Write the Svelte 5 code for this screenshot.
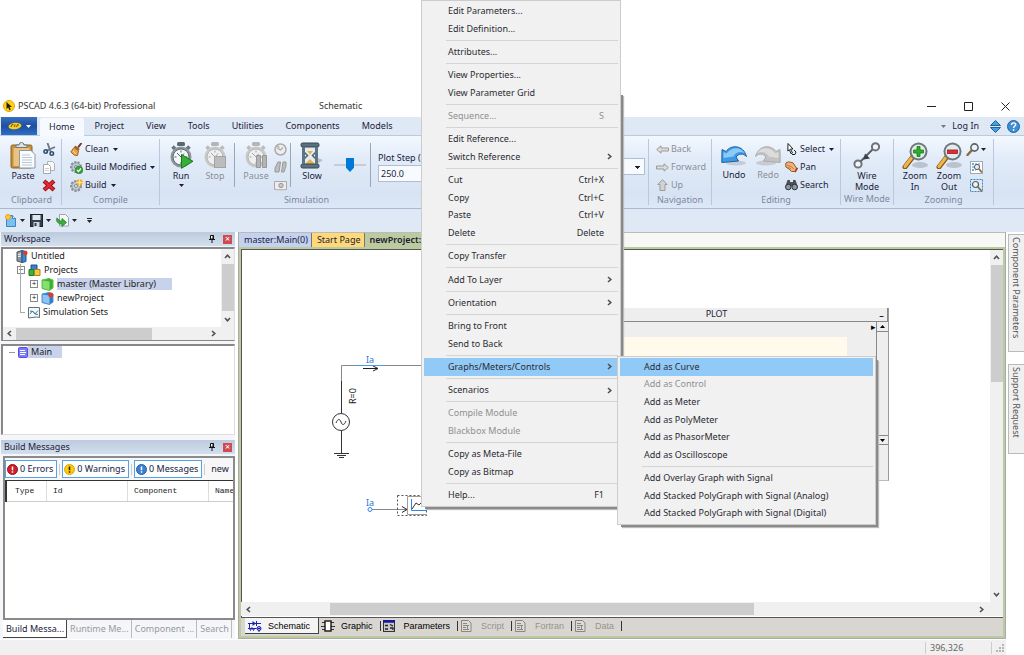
<script lang="ts">
  interface MenuItem {
    label?: string;
    key?: string;
    off?: boolean;
    sub?: boolean;
    hot?: boolean;
  }

  const sep: MenuItem = {};

  const contextMenu: MenuItem[] = [
    { label: 'Edit Parameters...' },
    { label: 'Edit Definition...' },
    sep,
    { label: 'Attributes...' },
    sep,
    { label: 'View Properties...' },
    { label: 'View Parameter Grid' },
    sep,
    { label: 'Sequence...', key: 'S', off: true },
    sep,
    { label: 'Edit Reference...' },
    { label: 'Switch Reference', sub: true },
    sep,
    { label: 'Cut', key: 'Ctrl+X' },
    { label: 'Copy', key: 'Ctrl+C' },
    { label: 'Paste', key: 'Ctrl+V' },
    { label: 'Delete', key: 'Delete' },
    sep,
    { label: 'Copy Transfer' },
    sep,
    { label: 'Add To Layer', sub: true },
    sep,
    { label: 'Orientation', sub: true },
    sep,
    { label: 'Bring to Front' },
    { label: 'Send to Back' },
    sep,
    { label: 'Graphs/Meters/Controls', sub: true, hot: true },
    sep,
    { label: 'Scenarios', sub: true },
    sep,
    { label: 'Compile Module', off: true },
    { label: 'Blackbox Module', off: true },
    sep,
    { label: 'Copy as Meta-File' },
    { label: 'Copy as Bitmap' },
    sep,
    { label: 'Help...', key: 'F1' },
  ];

  const graphMenu: MenuItem[] = [
    { label: 'Add as Curve', hot: true },
    { label: 'Add as Control', off: true },
    { label: 'Add as Meter' },
    { label: 'Add as PolyMeter' },
    { label: 'Add as PhasorMeter' },
    { label: 'Add as Oscilloscope' },
    sep,
    { label: 'Add Overlay Graph with Signal' },
    { label: 'Add Stacked PolyGraph with Signal (Analog)' },
    { label: 'Add Stacked PolyGraph with Signal (Digital)' },
  ];

  const ribbonTabs = ['Home', 'Project', 'View', 'Tools', 'Utilities', 'Components', 'Models'];
  const outputTabs = ['Build Messa...', 'Runtime Me...', 'Component ...', 'Search'];
  const viewTabs = [
    { label: 'Schematic', icon: 'schematic' },
    { label: 'Graphic', icon: 'graphic' },
    { label: 'Parameters', icon: 'params' },
    { label: 'Script', icon: 'script', off: true },
    { label: 'Fortran', icon: 'script', off: true },
    { label: 'Data', icon: 'script', off: true },
  ];

  let activeTab = $state('Home');
  let plotStep = $state('250.0');
  let speed = $state(50);
</script>

{#snippet caret()}
  <svg class="caret" width="5" height="3" viewBox="0 0 5 3"><path d="M0 0h5L2.5 3z" fill="currentColor" /></svg>
{/snippet}

{#snippet chevron(dir: string)}
  <svg class="chev {dir}" width="7" height="7" viewBox="0 0 7 7">
    <path d="M1 5l2.500-2.800L6 5" fill="none" stroke="#505050" stroke-width="1.600" />
  </svg>
{/snippet}

{#snippet stopwatch(off: boolean)}
  <rect x="9" y="0" width="8" height="4" rx="1.500" fill={off ? '#b5b5b5' : '#5d666e'} />
  <path d="M4.500 7l2.500-2.500M21.500 7L19 4.500" stroke={off ? '#bbb' : '#6b747c'} stroke-width="3.500" />
  <circle cx="13" cy="15" r="10.500" fill={off ? '#c9c9c9' : '#8b969d'} />
  <circle cx="13" cy="15" r="8" fill={off ? '#efefef' : '#f4f7f8'} stroke={off ? '#b5b5b5' : '#5f6a71'} />
  <path d="M13 8.500v2M13 20v2M6.500 15h2M17.500 15h2M13 15l-4-4M13 15l3-3.500" stroke={off ? '#a5a5a5' : '#56616a'} fill="none" />
{/snippet}

{#snippet lens()}
  <ellipse cx="18" cy="23" rx="8" ry="3" fill="#b9c2cd" />
  <path d="M10 16L3 25" stroke="#8a5a17" stroke-width="5" stroke-linecap="round" />
  <path d="M9.500 16L3 24.500" stroke="#f0b64a" stroke-width="3" stroke-linecap="round" />
  <circle cx="16.500" cy="9.500" r="9" fill="#6d777e" />
  <circle cx="16.500" cy="9.500" r="7" fill="#e4ecea" />
{/snippet}

{#snippet gear()}
  <circle cx="6" cy="6" r="5" fill="none" stroke="#87929c" stroke-width="2" stroke-dasharray="2.200 1.300" />
  <circle cx="6" cy="6" r="4.200" fill="#c3ccd5" stroke="#8792a0" />
  <circle cx="6" cy="6" r="1.500" fill="#f5f7f9" stroke="#7c8791" />
{/snippet}

{#snippet icon(name: string)}
  {#if name === 'app'}
    <svg width="12" height="12" viewBox="0 0 12 12"><circle cx="6" cy="6" r="5.500" fill="#ffd21a" stroke="#e3a800" /><path d="M3.500 2v7l1.700-1.500 1.200 2.700 1.400-.7-1.300-2.500H9z" fill="#2b1c10" /></svg>
  {:else if name === 'logo'}
    <svg width="14" height="8" viewBox="0 0 14 8"><ellipse cx="7" cy="4" rx="6.500" ry="3.200" fill="#f6cf1c" transform="rotate(-6 7 4)" /><path d="M3 5l1-2.500 1.500.3M7 2.500L6.500 5M8.500 5l1-2.500 1.500.5" stroke="#7a4c00" fill="none" /></svg>
  {:else if name === 'paste'}
    <svg width="26" height="27" viewBox="0 0 26 27">
      <rect x="1" y="3" width="21" height="23" rx="1.500" fill="#c7913c" stroke="#8f6220" />
      <rect x="3.500" y="6" width="16" height="18" fill="#e8c480" />
      <path d="M6 5.500h11V3h-3a2.500 2.500 0 0 0-5 0H6z" fill="#dde1e4" stroke="#6f767c" />
      <path d="M9.500 8.500H21l4 4V26H9.500z" fill="#f9fbfd" stroke="#8d99a8" />
      <path d="M12 13h8M12 15.500h10M12 18h10M12 20.500h10M12 23h10" stroke="#b9c7d8" />
    </svg>
  {:else if name === 'cut'}
    <svg width="13" height="13" viewBox="0 0 13 13"><path d="M4.500 0l3 8.500M12 4L3 8" stroke="#6b7884" stroke-width="1.800" /><circle cx="2.700" cy="8.500" r="1.700" fill="none" stroke="#33506e" stroke-width="1.600" /><circle cx="8.800" cy="10.500" r="1.700" fill="none" stroke="#33506e" stroke-width="1.600" /></svg>
  {:else if name === 'copy'}
    <svg width="12" height="13" viewBox="0 0 12 13"><path d="M4.500.5h5l2 2v7h-7z" fill="#f7f7f7" stroke="#b0b4b9" /><path d="M.5 3.500h5l2 2v7h-7z" fill="#fff" stroke="#a4a8ad" /><path d="M2 7.500h4M2 9.500h4" stroke="#c8ccd0" /></svg>
  {:else if name === 'delete'}
    <svg width="14" height="13" viewBox="0 0 14 13"><path d="M2 2l10 9M12 2L2 11" stroke="#8f0d12" stroke-width="4.200" /><path d="M2.500 2.400l9 8.200M11.500 2.400l-9 8.200" stroke="#e0282e" stroke-width="2.600" /></svg>
  {:else if name === 'clean'}
    <svg width="13" height="13" viewBox="0 0 13 13"><path d="M11.500 0L8 4.500" stroke="#8e2f1a" stroke-width="2" /><path d="M4.500 3.500l4.500 3.500" stroke="#8e6a3a" stroke-width="2.500" /><path d="M4 4.500l4.500 3.500-1 4.500-3-.3L.8 9z" fill="#e9a54b" stroke="#a8641c" /><path d="M3 8l3 3" stroke="#ffe0a6" /></svg>
  {:else if name === 'buildmod'}
    <svg width="13" height="13" viewBox="0 0 13 13">{@render gear()}<circle cx="9" cy="9" r="3.800" fill="#35a23a" stroke="#1b7424" stroke-width=".6" /><path d="M7 9l1.500 1.500L11 7.500" stroke="#fff" stroke-width="1.200" fill="none" /></svg>
  {:else if name === 'build'}
    <svg width="13" height="13" viewBox="0 0 13 13"><g transform="translate(0 1)">{@render gear()}</g><circle cx="9.500" cy="3.500" r="2.800" fill="#ffca3a" stroke="#e89a1a" /><path d="M9.500 0v7M6 3.500h7" stroke="#ffe9a0" stroke-width=".8" /></svg>
  {:else if name === 'run'}
    <svg width="26" height="27" viewBox="0 0 26 27">{@render stopwatch(false)}<path d="M13.500 12.500l11.500 6.800-11.500 7z" fill="#36b035" stroke="#167a1b" /></svg>
  {:else if name === 'stop'}
    <svg width="26" height="27" viewBox="0 0 26 27">{@render stopwatch(true)}<rect x="12.500" y="14.500" width="11" height="11" fill="#bcbcbc" stroke="#a3a3a3" /></svg>
  {:else if name === 'pause'}
    <svg width="26" height="27" viewBox="0 0 26 27">{@render stopwatch(true)}<path d="M13.500 13.500h4v12h-4zM19.500 13.500h4v12h-4z" fill="#b4b4b4" stroke="#979797" /></svg>
  {:else if name === 'clock'}
    <svg width="13" height="13" viewBox="0 0 13 13"><circle cx="6.500" cy="6.500" r="5.500" fill="#eee" stroke="#aaa" stroke-width="1.500" /><path d="M3 5l3.500 2L9 4.500M2.500 2.500l3 2" stroke="#aaa" stroke-width="1.300" fill="none" /></svg>
  {:else if name === 'snap'}
    <svg width="13" height="12" viewBox="0 0 13 12"><path d="M4 1h2.500L5 11H1V7zM9 1h3v4l-2 6H7.500z" fill="#bdbdbd" stroke="#999" /></svg>
  {:else if name === 'camera'}
    <svg width="13" height="11" viewBox="0 0 13 11"><path d="M.5 1.500h12v8H.5z" fill="#ececec" stroke="#a9a9a9" /><circle cx="7" cy="5.500" r="2.200" fill="#c6c6c6" stroke="#999" /><path d="M2 10h10" stroke="#ccc" /></svg>
  {:else if name === 'slow'}
    <svg width="24" height="27" viewBox="0 0 24 27">
      <path d="M14 24l9-6-5-2z" fill="#b7bfc7" />
      <path d="M3 3h14v6l-4.500 4.500L17 18v6H3v-6l4.500-4.500L3 9z" fill="#e3ebef" stroke="#4d6271" stroke-width="1.500" />
      <path d="M5 22l5-5 5 5z" fill="#eab04a" /><path d="M7 9h6l-3 3.500z" fill="#eab04a" />
      <rect x="1" y="1" width="18" height="4" rx="1.500" fill="#5b7180" stroke="#374955" />
      <rect x="1" y="22" width="18" height="4" rx="1.500" fill="#5b7180" stroke="#374955" />
      <path d="M3.500 5v17M16.500 5v17" stroke="#5d7483" stroke-width="3" />
    </svg>
  {:else if name === 'back' || name === 'forward'}
    <svg width="13" height="9" viewBox="0 0 13 9"><path transform={name === 'forward' ? 'matrix(-1 0 0 1 13 0)' : null} d="M.7 4.500L5 .8V3h7.500v3H5v2.200z" fill="#dcdcdc" stroke="#9b9b9b" /></svg>
  {:else if name === 'up'}
    <svg width="11" height="12" viewBox="0 0 11 12"><path d="M5.500.7L10.200 5.500H8v6H3v-6H.8z" fill="#d2d2d2" stroke="#9b9b9b" /></svg>
  {:else if name === 'undo' || name === 'redo'}
    {@const on = name === 'undo'}
    <svg width="26" height="21" viewBox="0 0 26 21">
      <g transform={on ? null : 'matrix(-1 0 0 1 26 0)'}>
        <ellipse cx="15" cy="18" rx="10" ry="2.500" fill="#c5ccd4" />
        <path d="M1 4.500l4 2C10-.5 22-.5 25.500 11.500c-3.500-3.500-8-3-10.500.5l2.500 4L.8 17.500z" fill={on ? '#3d9be6' : '#c3c3c3'} stroke={on ? '#1f5f9e' : '#aaa'} />
        <path d="M2.500 7l3 1.500C11 1 20 2 23.500 8c-5-2-9-.5-11 3.500L2.500 13z" fill={on ? '#8ccaf7' : '#dcdcdc'} />
      </g>
    </svg>
  {:else if name === 'select'}
    <svg width="13" height="13" viewBox="0 0 13 13"><path d="M3 .5l5 5.500H5.500l2 4-1.500.7-1.700-4L2.800 8z" fill="#fff" stroke="#222" /><path d="M9 7l2 2-1 2.500H7" fill="none" stroke="#222" /></svg>
  {:else if name === 'pan'}
    <svg width="13" height="12" viewBox="0 0 13 12"><path d="M.8 2L3.500.8l4.500 1L11.500 7l-1 3.500H6.500L4 8 .8 6z" fill="#f0b37c" stroke="#9b5a28" /><path d="M2 4l4 1.500L9 8M3 6l3 2" stroke="#c47c44" fill="none" /><path d="M10 11l2.500-4" stroke="#a33f1b" stroke-width="1.500" /></svg>
  {:else if name === 'search'}
    <svg width="13" height="12" viewBox="0 0 13 12"><path d="M2.500 1h2.500v2h3V1h2.500l2 6H.5z" fill="#4a5057" /><circle cx="3.300" cy="8" r="2.800" fill="#8e979f" stroke="#2d3237" /><circle cx="9.700" cy="8" r="2.800" fill="#8e979f" stroke="#2d3237" /></svg>
  {:else if name === 'wire'}
    <svg width="28" height="27" viewBox="0 0 28 27"><path d="M5 22L22 5" stroke="#555b62" stroke-width="1.800" /><path d="M10.500 17.500l1.500-6 5 5z" fill="#3a3f45" /><circle cx="5" cy="22" r="3.600" fill="#f2f4f6" stroke="#6c737a" stroke-width="2" /><circle cx="22.500" cy="4.800" r="3.600" fill="#f2f4f6" stroke="#6c737a" stroke-width="2" /></svg>
  {:else if name === 'zoomin'}
    <svg width="27" height="27" viewBox="0 0 27 27">{@render lens()}<path d="M15 4.500h3V8h3.500v3H18v3.500h-3V11h-3.500V8H15z" fill="#2fae2a" stroke="#187a18" stroke-width=".8" /></svg>
  {:else if name === 'zoomout'}
    <svg width="27" height="27" viewBox="0 0 27 27">{@render lens()}<rect x="11.500" y="8" width="10" height="3.500" fill="#dc2f3c" stroke="#9c1421" stroke-width=".8" /></svg>
  {:else if name === 'zoom'}
    <svg width="14" height="13" viewBox="0 0 14 13"><path d="M6 7l-4.500 5" stroke="#8b6a3c" stroke-width="2.400" stroke-linecap="round" /><circle cx="8.500" cy="4.500" r="3.600" fill="#eef2f2" stroke="#59636b" stroke-width="1.600" /></svg>
  {:else if name === 'zoompage'}
    <svg width="13" height="13" viewBox="0 0 13 13"><rect x=".5" y=".5" width="12" height="12" fill="#fdfdfd" stroke="#a2aab2" /><path d="M3 2v9M2 3h9M2 9h4" stroke="#4a86c2" stroke-dasharray="2 1" /><circle cx="7" cy="6" r="2.600" fill="#e3edf0" stroke="#525c64" /><path d="M9 8l3 3.500" stroke="#8b6a3c" stroke-width="1.800" /></svg>
  {:else if name === 'zoombox'}
    <svg width="13" height="13" viewBox="0 0 13 13"><rect x=".5" y=".5" width="12" height="12" fill="#dce9f6" stroke="#3d84c4" stroke-dasharray="2 1" /><circle cx="5.500" cy="5.500" r="3" fill="#edf3f5" stroke="#525c64" stroke-width="1.200" /><path d="M8 8l3.500 4" stroke="#8b6a3c" stroke-width="1.800" /></svg>
  {:else if name === 'new'}
    <svg width="12" height="13" viewBox="0 0 12 13"><path d="M1.500 1.500h6l3 3v8h-9z" fill="#7cc0f2" stroke="#3f86bd" /><path d="M7.500 1.500v3h3" fill="#e8f4fd" stroke="#3f86bd" /><circle cx="3" cy="3" r="2.500" fill="#ffc83d" stroke="#f0a020" /></svg>
  {:else if name === 'save'}
    <svg width="13" height="13" viewBox="0 0 13 13"><rect x=".5" y=".5" width="12" height="12" fill="#34404c" stroke="#1b232b" /><rect x="2.500" y="1" width="8" height="5" fill="#dfe7ee" /><rect x="3.500" y="8" width="6" height="5" fill="#cfd8e0" /><rect x="4.500" y="9" width="2" height="3" fill="#34404c" /></svg>
  {:else if name === 'load'}
    <svg width="13" height="13" viewBox="0 0 13 13"><path d="M3.500.5h6l3 3v8.500h-9z" fill="#f5f7f9" stroke="#9aa4ae" /><path d="M.8 4v3.500l3 2.500H6v2.500l4.500-4L6 4.500V7H4z" fill="#3fae3c" stroke="#1e7c22" stroke-width=".8" /></svg>
  {:else if name === 'updown'}
    <svg width="11" height="13" viewBox="0 0 11 13"><path d="M.5 5.500L5.500.5l5 5z" fill="#4aa0df" stroke="#1d639b" /><path d="M.5 7.500h10l-5 5z" fill="#4aa0df" stroke="#1d639b" /></svg>
  {:else if name === 'help'}
    <svg width="13" height="13" viewBox="0 0 13 13"><circle cx="6.500" cy="6.500" r="6" fill="#3f8fd2" stroke="#24639c" /><path d="M4.500 5c0-3 4.200-2.500 4.200-.3C8.700 6 6.600 6.200 6.600 8" fill="none" stroke="#fff" stroke-width="1.400" /><circle cx="6.600" cy="9.900" r=".9" fill="#fff" /></svg>
  {:else if name === 'pin'}
    <svg width="6" height="8" viewBox="0 0 6 8"><path d="M1.500.5h3V4h-3z" fill="#fff" stroke="#111" /><path d="M4 0v4M0 4.500h6M3 5v3" stroke="#111" /></svg>
  {:else if name === 'root'}
    <svg width="12" height="13" viewBox="0 0 12 13"><path d="M1 2l5-1.500v12L1 11z" fill="#8d979f" stroke="#4b555d" /><path d="M6 .5l4 1v10l-4 1z" fill="#3c8bd0" stroke="#1c5790" /><path d="M2 4.500l3-.7M2 6.500l3-.5" stroke="#fff" /><circle cx="9.300" cy="3" r="2.300" fill="#e33a25" /></svg>
  {:else if name === 'projects'}
    <svg width="13" height="12" viewBox="0 0 13 12"><path d="M3 1h6v6H3z" fill="#3b7fd0" stroke="#1c4f94" /><path d="M1 5.500h5v6H1z" fill="#3fae3c" stroke="#1f7a22" /><path d="M6.500 5.500h5.500v6H6.500z" fill="#f1cb3c" stroke="#a8841a" /></svg>
  {:else if name === 'lib' || name === 'case'}
    {@const lib = name === 'lib'}
    <svg width="13" height="13" viewBox="0 0 13 13"><path d="M1 2l7-1.500 4 1.500v8l-3.500 2.500L1 10.500z" fill={lib ? '#3fae2c' : '#2f7cc8'} stroke={lib ? '#5cc04c' : '#4a8fd0'} /><path d="M1.500 2.500l7 1v8.500L1.500 10z" fill={lib ? '#86e070' : '#8fc4f2'} />{#if !lib}<circle cx="9.800" cy="3" r="2.500" fill="#e33a25" />{/if}</svg>
  {:else if name === 'sets'}
    <svg width="12" height="13" viewBox="0 0 12 13"><path d="M.5 1.500h11v10l-3-.5-8 1z" fill="#f5f7f8" stroke="#666e76" /><path d="M2 8l2.500-3L7 8l3-3.500" stroke="#2b9a6c" fill="none" /><path d="M2 5l3 .5 2 2.500 3 .5" stroke="#3b6fc4" fill="none" /></svg>
  {:else if name === 'main'}
    <svg width="10" height="11" viewBox="0 0 10 11"><rect x=".5" y=".5" width="9" height="10" rx="1" fill="#7b78f5" stroke="#5550dd" /><path d="M2 3.500h5M2 5.500h6M2 7.500h5" stroke="#fff" /></svg>
  {:else if name === 'err' || name === 'warn' || name === 'msg'}
    <svg width="11" height="11" viewBox="0 0 11 11"><circle cx="5.500" cy="5.500" r="5" fill={name === 'err' ? '#cf1f2a' : name === 'warn' ? '#ffc90e' : '#3c7fd0'} stroke={name === 'err' ? '#9c1018' : name === 'warn' ? '#dba800' : '#2a5fa3'} /><path d="M5.500 2.500v3.800M5.500 7.300v1.500" stroke={name === 'warn' ? '#222' : '#fff'} stroke-width="1.500" /></svg>
  {:else if name === 'schematic'}
    <svg width="14" height="12" viewBox="0 0 14 12"><path d="M0 3.500h13M1.500 3.500v5H7" fill="none" stroke="#1a23b0" /><path d="M4.500 1v5l3.500-2.500z" fill="#1a23b0" /><path d="M8.500 1v5" stroke="#1a23b0" /><path d="M0 8.500h1.500l1 2 1.500-3 1.500 3 1-2h2" fill="none" stroke="#1a23b0" /><circle cx="11" cy="8.500" r="2" fill="#aeb2ee" stroke="#1a23b0" /><path d="M11 10.500v1.500M9.500 8.500h3" stroke="#1a23b0" /></svg>
  {:else if name === 'graphic'}
    <svg width="14" height="12" viewBox="0 0 14 12"><path d="M1 2.500h3M0 6.500h4M1 9.500h3M10 2.500h3M10 6.500h4M10 9.500h3" stroke="#333" /><rect x="4" y="1" width="6" height="10" fill="#fff" stroke="#222" stroke-width="1.500" /></svg>
  {:else if name === 'params'}
    <svg width="12" height="12" viewBox="0 0 12 12"><rect x=".5" y=".5" width="11" height="11" fill="#c9c9c9" stroke="#333" /><path d="M0 1.500h12" stroke="#1616a4" stroke-width="2.500" /><path d="M2 5.500h3M2 9h3M7 4.500l3 1.500M7 8h3v2" stroke="#222" stroke-width="1.300" fill="none" /></svg>
  {:else if name === 'script'}
    <svg width="12" height="12" viewBox="0 0 12 12"><path d="M1.500.5h7l2.500 2.500v8.500h-9.500z" fill="#dedbd6" stroke="#8a8782" /><path d="M3 3.500h4M3 5.500h6M3 7.500h3M3 9.500h6M7.500 5v5" stroke="#8a8782" /></svg>
  {/if}
{/snippet}

{#snippet big(name: string, label: string, off = false, drop = false)}
  <button class="big" disabled={off}>
    {@render icon(name)}
    <span>{label}</span>
    {#if drop}{@render caret()}{/if}
  </button>
{/snippet}

{#snippet small(name: string, label: string, off = false, drop = false)}
  <button class="small" disabled={off}>
    <i>{@render icon(name)}</i>
    {label}
    {#if drop}{@render caret()}{/if}
  </button>
{/snippet}

{#snippet popup(items: MenuItem[])}
  <ul role="menu">
    {#each items as item}
      {#if item.label}
        <li class="entry" class:hot={item.hot}>
          <button role="menuitem" disabled={item.off}>
            <span>{item.label}</span>
            {#if item.key}<kbd>{item.key}</kbd>{/if}
            {#if item.sub}{@render chevron('right')}{/if}
          </button>
        </li>
      {:else}
        <li class="sep" role="separator"></li>
      {/if}
    {/each}
  </ul>
{/snippet}

<main class="window">
  <header class="titlebar">
    {@render icon('app')}
    <h1>PSCAD 4.6.3 (64-bit) Professional</h1>
    <span class="context-title">Schematic</span>
    <div class="sysbuttons">
      <button aria-label="Minimize"><svg width="9" height="9" viewBox="0 0 9 9"><path d="M0 4.500h9" stroke="#222" /></svg></button>
      <button aria-label="Maximize"><svg width="9" height="9" viewBox="0 0 9 9"><path d="M.5.5h8v8h-8z" fill="none" stroke="#222" /></svg></button>
      <button aria-label="Close"><svg width="9" height="9" viewBox="0 0 9 9"><path d="M.5.5l8 8M8.500.5l-8 8" stroke="#222" /></svg></button>
    </div>
  </header>

  <nav class="ribbon-tabs">
    <button class="appmenu" aria-label="Application menu">{@render icon('logo')}{@render caret()}</button>
    {#each ribbonTabs as tab (tab)}
      <button class="rtab" class:active={activeTab === tab} onclick={() => (activeTab = tab)}>{tab}</button>
    {/each}
    <div class="login">
      {@render caret()}
      <button>Log In</button>
      {@render icon('updown')}
      {@render icon('help')}
    </div>
  </nav>

  <section class="ribbon">
    <div class="group clipboard">
      <div class="tools">
        {@render big('paste', 'Paste')}
        <div class="stack icons">
          <button aria-label="Cut">{@render icon('cut')}</button>
          <button aria-label="Copy">{@render icon('copy')}</button>
          <button aria-label="Delete">{@render icon('delete')}</button>
        </div>
      </div>
      <h2>Clipboard</h2>
    </div>
    <div class="group compile">
      <div class="tools">
        <div class="stack">
          {@render small('clean', 'Clean', false, true)}
          {@render small('buildmod', 'Build Modified', false, true)}
          {@render small('build', 'Build', false, true)}
        </div>
      </div>
      <h2>Compile</h2>
    </div>
    <div class="group simulation">
      <div class="tools">
        {@render big('run', 'Run', false, true)}
        {@render big('stop', 'Stop', true)}
        <hr />
        {@render big('pause', 'Pause', true)}
        <div class="stack icons">
          <button aria-label="Snapshot time" disabled>{@render icon('clock')}</button>
          <button aria-label="Step" disabled>{@render icon('snap')}</button>
          <button aria-label="Take snapshot" disabled>{@render icon('camera')}</button>
        </div>
        <hr />
        {@render big('slow', 'Slow')}
        <input class="speed" type="range" aria-label="Speed" bind:value={speed} />
        <hr />
        <label class="plotstep">
          Plot Step (us)
          <input type="text" bind:value={plotStep} />
        </label>
      </div>
      <h2>Simulation</h2>
    </div>
    <div class="group channels">
      <div class="tools">
        <select aria-label="Run channel"><option></option></select>
      </div>
    </div>
    <div class="group navigation">
      <div class="tools">
        <div class="stack">
          {@render small('back', 'Back', true)}
          {@render small('forward', 'Forward', true)}
          {@render small('up', 'Up', true)}
        </div>
      </div>
      <h2>Navigation</h2>
    </div>
    <div class="group editing">
      <div class="tools">
        {@render big('undo', 'Undo')}
        {@render big('redo', 'Redo', true)}
        <div class="stack">
          {@render small('select', 'Select', false, true)}
          {@render small('pan', 'Pan')}
          {@render small('search', 'Search')}
        </div>
      </div>
      <h2>Editing</h2>
    </div>
    <div class="group wiring">
      <div class="tools">{@render big('wire', 'Wire Mode')}</div>
      <h2>Wire Mode</h2>
    </div>
    <div class="group zooming">
      <div class="tools">
        {@render big('zoomin', 'Zoom In')}
        {@render big('zoomout', 'Zoom Out')}
        <div class="stack icons">
          <button aria-label="Zoom">{@render icon('zoom')}{@render caret()}</button>
          <button aria-label="Zoom page">{@render icon('zoompage')}</button>
          <button aria-label="Zoom rectangle">{@render icon('zoombox')}</button>
        </div>
      </div>
      <h2>Zooming</h2>
    </div>
  </section>

  <div class="quickbar">
    <button aria-label="New">{@render icon('new')}{@render caret()}</button>
    <button aria-label="Save">{@render icon('save')}{@render caret()}</button>
    <button aria-label="Load">{@render icon('load')}{@render caret()}</button>
    <button class="more" aria-label="Customize">{@render caret()}</button>
  </div>

  <div class="workarea">
    <aside class="sidebar">
      <div class="pane-head">
        <h2>Workspace</h2>
        {@render icon('pin')}
        <button class="close" aria-label="Close workspace">×</button>
      </div>
      <div class="treebox">
        <ul class="tree">
          <li class="l0">{@render icon('root')}<span>Untitled</span></li>
          <li class="l1"><b class="box">−</b>{@render icon('projects')}<span>Projects</span></li>
          <li class="l2"><b class="box">+</b>{@render icon('lib')}<span class="picked wide">master (Master Library)</span></li>
          <li class="l2"><b class="box">+</b>{@render icon('case')}<span>newProject</span></li>
          <li class="l1"><b class="elbow"></b>{@render icon('sets')}<span>Simulation Sets</span></li>
        </ul>
        <div class="vbar">{@render chevron('up')}<div class="thumb"></div>{@render chevron('down')}</div>
        <div class="hbar">{@render chevron('left')}<div class="thumb"></div>{@render chevron('right')}</div>
      </div>
      <div class="mainbox">
        <div class="mainrow"><b></b>{@render icon('main')}<span class="picked">Main</span></div>
      </div>

      <div class="pane-head">
        <h2>Build Messages</h2>
        {@render icon('pin')}
        <button class="close" aria-label="Close build messages">×</button>
      </div>
      <div class="output">
        <div class="filters">
          <button>{@render icon('err')}0 Errors</button>
          <i></i>
          <button>{@render icon('warn')}0 Warnings</button>
          <i></i>
          <button>{@render icon('msg')}0 Messages</button>
          <i></i>
          <span>new</span>
        </div>
        <table>
          <thead>
            <tr><th class="c-type">Type</th><th class="c-id">Id</th><th class="c-id">Component</th><th>Name</th></tr>
          </thead>
        </table>
      </div>
      <div class="output-tabs">
        {#each outputTabs as tab, i}
          <button class:active={i === 0}>{tab}</button>
        {/each}
      </div>
    </aside>

    <section class="document">
      <div class="doc-tabs">
        <button class="blue">master:Main(0)</button>
        <button class="amber">Start Page</button>
        <button class="green">newProject:</button>
      </div>
      <div class="frame">
        <div class="canvas">
          <svg class="diagram" width="200" height="280" viewBox="0 0 200 280">
            <g fill="none" stroke="#555">
              <path d="M100.500 131v-15.500H200" stroke="#888" />
              <path d="M100.500 131v32M100.500 181v22" stroke="#333" />
              <circle cx="100" cy="172" r="8.500" stroke="#333" />
              <path d="M95 173c2-5 4-4 5-1s3 4 5-1" stroke="#333" />
              <path d="M93 203.500h15M96 205.500h9M98 207.500h5" stroke="#333" />
              <path d="M122 118.500h14M132 116l5 2.500-5 2.500" stroke="#222" />
              <path d="M115 115.500h28" stroke="#4a9be0" />
              <path d="M131 259.500h36" stroke="#888" />
              <path d="M161 256.500l5 3-5 3" stroke="#222" />
              <circle cx="129" cy="259.500" r="2" stroke="#2f86e0" />
              <rect x="156.500" y="245.500" width="29" height="20" stroke="#555" stroke-dasharray="2 2" />
              <path d="M186 246.500h-19.500v18h19.500" stroke="#a59a94" />
              <path d="M170.500 249v11.500H186" stroke="#2f86e0" />
              <path d="M171 259l4-6 3 2 3-3 5 1" stroke="#333" />
            </g>
            <text x="125" y="113" class="sig">Ia</text>
            <text x="125" y="256" class="sig">Ia</text>
            <text transform="translate(115 154) rotate(-90)">R=0</text>
          </svg>

          <div class="plot">
            <div class="plot-title"><span>PLOT</span><button aria-label="Minimize plot">–</button></div>
            <div class="plot-body">
              <div class="plot-pane"><i>▸</i><div class="graph"></div></div>
              <div class="plot-scroll">
                <button aria-label="Scroll up">{@render caret()}</button>
                <div></div>
                <button aria-label="Scroll down">{@render caret()}</button>
              </div>
            </div>
          </div>
        </div>
        <div class="vbar">{@render chevron('up')}<div class="thumb"></div>{@render chevron('down')}</div>
        <div class="hbar">{@render chevron('left')}<div class="thumb"></div>{@render chevron('right')}</div>
        <div class="view-tabs">
          {#each viewTabs as tab, i}
            <button class:active={i === 0} disabled={tab.off}>{@render icon(tab.icon)}{tab.label}</button>
          {/each}
        </div>
      </div>
    </section>

    <aside class="dock">
      <button class="tall">Component Parameters</button>
      <button>Support Request</button>
    </aside>
  </div>

  <footer class="status">
    <span>396,326</span>
    <svg width="14" height="10" viewBox="0 0 14 10"><path d="M10 1h2v2h-2zM7 4h2v2H7zM10 4h2v2h-2zM4 7h2v2H4zM7 7h2v2H7zM10 7h2v2h-2z" fill="#b5b5b5" /></svg>
  </footer>

  <div class="menu context">{@render popup(contextMenu)}</div>
  <div class="menu submenu">{@render popup(graphMenu)}</div>
</main>

<style>
  :global(body) {
    background: #fff;
  }

  .window {
    display: flex;
    flex-direction: column;
    box-sizing: border-box;
    min-height: 100vh;
    padding-top: 96px;
    font: 9px/12px 'Noto Sans', 'Open Sans', sans-serif;
    color: #1c1b3a;
    position: relative;
    overflow: hidden;
  }

  button, input, select {
    font: inherit;
    color: inherit;
  }

  button {
    border: 0;
    padding: 0;
    background: none;
    white-space: nowrap;
  }

  button:disabled { color: #8b8e96; }

  svg { flex: none; display: block; }

  h1, h2 { margin: 0; font: inherit; }

  ul { list-style: none; margin: 0; padding: 0; }

  /* title and ribbon tabs */
  .titlebar {
    display: flex;
    align-items: center;
    height: 20px;
    padding: 0 14px 1px 3px;
    color: #333;
  }
  .titlebar h1 { width: 301px; padding-left: 3px; }
  .sysbuttons { display: flex; gap: 28px; margin-left: auto; }

  .ribbon-tabs {
    display: flex;
    align-items: flex-end;
    height: 18px;
    padding-left: 1px;
    background: #dfe8f5;
    border-bottom: 1px solid #b9cbe2;
  }
  .appmenu {
    display: flex;
    align-items: center;
    gap: 4px;
    width: 36px;
    height: 18px;
    padding-left: 7px;
    margin-right: 3px;
    color: #fff;
    background: linear-gradient(#3a6fc0, #1d4e9f 50%, #2f6fc4);
  }
  .rtab { height: 18px; padding: 0 11px; }
  .rtab.active {
    padding: 0 9px;
    margin-bottom: -1px;
    height: 18px;
    background: #f6faff;
    border-radius: 2px 2px 0 0;
  }
  .login {
    display: flex;
    align-items: center;
    gap: 6px;
    height: 18px;
    margin-left: auto;
    padding-right: 4px;
  }
  .login button { margin-right: 5px; }
  .login .caret { color: #777; }

  /* ribbon */
  .ribbon {
    display: flex;
    height: 73px;
    box-sizing: border-box;
    padding: 3px 30px 0 2px;
    background: linear-gradient(#f3f8fe, #e2ecf9 30%, #d7e3f3 80%, #dce8f6);
    border-bottom: 1px solid #a9b9cf;
  }
  .group {
    display: flex;
    flex-direction: column;
    box-sizing: border-box;
    height: 66px;
    border-right: 1px solid #b9c8dc;
  }
  .group h2 { text-align: center; color: #7d87a0; white-space: nowrap; }
  .clipboard { width: 60px; }
  .compile { width: 98px; }
  .simulation { width: 293px; border: 0; }
  .channels { flex: 1; border-color: #b9c8dc; }
  .navigation { width: 63px; }
  .editing { width: 129px; }
  .wiring { width: 53px; }
  .zooming { width: 100px; }

  .tools { display: flex; flex: 1; padding-left: 4px; }
  .tools hr {
    width: 1px;
    height: 44px;
    margin: 4px 4px 0 2px;
    border: 0;
    background: #9aa5b5;
  }
  .big {
    display: flex;
    flex-direction: column;
    align-items: center;
    justify-content: flex-start;
    width: 34px;
    padding-top: 3px;
    line-height: 11px;
    white-space: normal;
  }
  .big :global(svg:first-child) { margin-bottom: 1px; }
  .big .caret { margin-top: 3px; }
  .editing .big :global(svg:first-child) { margin-top: 3px; margin-bottom: 3px; }
  .wiring .big { width: 44px; padding-left: 6px; padding-right: 6px; }

  .stack { display: flex; flex-direction: column; padding-top: 1px; }
  .small {
    display: flex;
    align-items: center;
    gap: 2px;
    height: 18px;
  }
  .small i { display: flex; justify-content: center; width: 13px; }
  .small .caret { margin-left: 2px; }
  .icons button {
    display: flex;
    align-items: center;
    justify-content: center;
    gap: 1px;
    height: 18px;
    width: 18px;
  }
  .compile .tools { padding-left: 8px; }
  .simulation .tools { padding-left: 4px; }
  .simulation .icons button { width: 15px; }
  .navigation .tools { padding-left: 7px; }
  .editing .tools { padding-left: 5px; }
  .zooming .icons { padding-left: 1px; }

  .speed {
    appearance: none;
    width: 32px;
    height: 16px;
    margin: 18px 2px 0 5px;
    background: linear-gradient(transparent 7px, #c9cdd3 7px, #c9cdd3 9px, transparent 9px);
  }
  .speed::-webkit-slider-thumb {
    appearance: none;
    width: 8px;
    height: 14px;
    background: #0078d7;
    clip-path: polygon(0 0, 100% 0, 100% 70%, 50% 100%, 0 70%);
  }
  .plotstep { padding: 13px 0 0 3px; white-space: nowrap; }
  .plotstep input {
    display: block;
    box-sizing: border-box;
    width: 60px;
    height: 17px;
    margin-top: 1px;
    padding: 0 2px;
    border: 1px solid #aebfd4;
    background: #f7faff;
  }
  .channels select {
    appearance: none;
    width: 100%;
    height: 17px;
    margin: 19px 3px 0 0;
    border: 1px solid #aebfd4;
    border-radius: 0;
    background: conic-gradient(from -45deg at 50% 100%, #222 90deg, transparent 0) right 4px top 7px / 5px 3px no-repeat, #f7faff;
  }

  .quickbar {
    display: flex;
    align-items: center;
    gap: 5px;
    height: 23px;
    padding-left: 5px;
    background: #dfe8f5;
    color: #222;
  }
  .quickbar button { display: flex; align-items: center; gap: 3px; }
  .quickbar .more { border-top: 1px solid #222; padding-top: 1px; margin-left: 5px; }

  /* work area */
  .workarea { display: flex; flex: 1; min-height: 0; background: #fff; }

  .sidebar {
    display: flex;
    flex-direction: column;
    box-sizing: border-box;
    width: 235px;
    padding-left: 1px;
    background: #f4f6fa;
  }
  .pane-head {
    display: flex;
    align-items: center;
    gap: 8px;
    height: 14px;
    padding: 0 3px;
    background: linear-gradient(#bccbdd, #d2dfee);
  }
  .pane-head h2 { flex: 1; }
  .close {
    width: 9px;
    height: 9px;
    background: #d04a52;
    color: #fff;
    line-height: 8px;
  }

  .vbar, .hbar {
    display: flex;
    align-items: center;
    justify-content: space-between;
    background: #f0f0f0;
  }
  .vbar { flex-direction: column; padding: 4px 0; box-sizing: border-box; }
  .hbar { padding: 0 4px; box-sizing: border-box; }
  .vbar .thumb { width: 12px; background: #cdcdcd; }
  .hbar .thumb { height: 12px; background: #cdcdcd; }
  .chev.down { transform: rotate(180deg); }
  .chev.left { transform: rotate(-90deg); }
  .chev.right { transform: rotate(90deg); }

  .treebox {
    display: grid;
    grid-template: 78px 13px / 1fr 13px;
    border: 1px solid #888;
    border-width: 2px 1px 1px 2px;
    border-right-color: #ddd;
    margin-top: 1px;
    background: #fff;
    color: #222;
  }
  .treebox .vbar .thumb { height: 47px; margin-bottom: auto; margin-top: 4px; }
  .treebox .hbar .thumb { width: 136px; margin: 0 auto 0 3px; }
  .treebox .hbar { padding: 0 17px 0 3px; grid-column: span 2; }
  .tree li {
    display: flex;
    align-items: center;
    gap: 3px;
    height: 14px;
    white-space: nowrap;
  }
  .tree .l0 { padding-left: 13px; }
  .tree .l1 { padding-left: 14px; }
  .tree .l2 { padding-left: 27px; }
  .box {
    width: 6px;
    height: 6px;
    border: 1px solid #888;
    font: 8px/6px 'Liberation Sans', sans-serif;
    text-align: center;
  }
  .elbow {
    width: 4px;
    height: 48px;
    margin: -48px 0 0 3px;
    border: 1px solid #aaa;
    border-width: 0 0 1px 1px;
  }
  .picked { background: #c8d2ea; padding-right: 10px; }
  .picked.wide { padding-right: 16px; }

  .mainbox {
    flex: none;
    height: 91px;
    margin: 3px 0 5px;
    box-sizing: border-box;
    border: 1px solid #ddd;
    border-width: 2px 1px 1px 2px;
    border-top-color: #888;
    border-left-color: #888;
    background: #fff;
    color: #222;
  }
  .mainrow { display: flex; align-items: center; gap: 3px; padding-left: 6px; }
  .mainrow b { width: 6px; height: 1px; background: #999; }
  .mainrow .picked { margin-left: -3px; padding-left: 3px; }

  .output {
    flex: 1;
    margin: 2px 0 0 2px;
    border: 2px solid #8a8a8a;
    background: #fff;
    overflow: hidden;
  }
  .filters {
    display: flex;
    align-items: center;
    height: 22px;
    background: #f7f7f7;
    border-bottom: 1px solid #333;
    white-space: nowrap;
  }
  .filters button {
    display: flex;
    align-items: center;
    gap: 2px;
    height: 18px;
    padding: 0 3px 0 1px;
    border: 1px solid #5a9fe0;
    background: #fbfdff;
  }
  .filters i { width: 1px; height: 11px; margin: 0 2px; background: #ccc; }
  .filters span { padding-left: 4px; }
  table {
    width: 100%;
    table-layout: fixed;
    border-collapse: collapse;
    border-left: 2px solid #333;
    font: 8px/20px 'Liberation Mono', monospace;
    color: #222;
  }
  th {
    padding: 0 0 0 6px;
    font-weight: normal;
    text-align: left;
    border-right: 1px solid #ddd;
    border-bottom: 1px solid #ccc;
  }
  th.c-type { width: 31px; padding-left: 8px; }
  th.c-id { width: 74px; }
  th:last-child { border-right: 0; }

  .output-tabs { display: flex; height: 18px; padding: 0 0 1px 2px; }
  .output-tabs button {
    padding: 0 2px 0 3px;
    color: #9a9a9a;
    border-right: 1px solid #bbb;
    line-height: 16px;
  }
  .output-tabs .active {
    color: #1c1b3a;
    background: #fff;
    border: 1px solid #444;
    border-width: 0 1px 1px 0;
  }

  .document {
    display: flex;
    flex-direction: column;
    flex: 1;
    min-width: 0;
    margin-left: 3px;
    border: 1px solid #aaa;
    border-top-color: #bbb;
  }
  .doc-tabs { display: flex; height: 14px; background: #f7f7f6; overflow: hidden; }
  .doc-tabs button { padding: 0 3px 0 5px; border-right: 1px solid #777; }
  .blue { background: #c4d2f0; }
  .amber { background: #ffd978; }
  .green { background: #bccb9d; font-weight: 600; }
  .frame {
    display: grid;
    grid-template: 1fr 14px 20px / 1fr 13px;
    flex: 1;
    min-height: 0;
    border: 2px solid #bccb9d;
    background: #fff;
    box-shadow: inset 1px 1px #555;
    padding: 1px 0 0;
  }
  .canvas { position: relative; overflow: hidden; }
  .frame .vbar .thumb { height: 117px; margin: 4px 0 auto; }
  .frame .hbar { grid-column: span 2; padding-right: 18px; }
  .frame .hbar .thumb { width: 424px; margin: 0 auto 0 78px; }
  .diagram { position: absolute; left: 0; top: 0; }
  .diagram text { fill: #222; }
  .diagram .sig { fill: #2f6fe0; }

  .plot {
    position: absolute;
    left: 316px;
    top: 58px;
    display: flex;
    flex-direction: column;
    width: 332px;
    height: 173px;
    background: #eee;
    border-right: 1px solid #999;
    border-bottom: 1px solid #bbb;
    box-sizing: border-box;
  }
  .plot-title { display: flex; height: 13px; border-bottom: 1px solid #888; }
  .plot-title span { flex: 1; text-align: center; }
  .plot-title button { width: 12px; border-right: 1px solid #888; font-weight: bold; line-height: 16px; }
  .plot-body { display: flex; flex: 1; }
  .plot-pane { flex: 1; }
  .plot-pane i { display: block; text-align: right; line-height: 10px; height: 15px; font-style: normal; color: #000; }
  .graph { height: 100px; margin-right: 29px; background: #fffaec; }
  .plot-scroll {
    display: flex;
    flex-direction: column;
    width: 11px;
    border-left: 1px solid #888;
  }
  .plot-scroll div { height: 103px; }
  .plot-scroll button {
    display: flex;
    align-items: center;
    justify-content: center;
    height: 10px;
    border-bottom: 1px solid #888;
    color: #000;
  }
  .plot-scroll button:first-child .caret { transform: scaleY(-1); }
  .plot-scroll button:last-child { border-top: 1px solid #888; }

  .view-tabs {
    grid-column: span 2;
    display: flex;
    margin-top: 1px;
    padding: 0 0 2px 4px;
    border-top: 1px solid #555;
    background: #d9d6d1;
    font-family: 'Liberation Sans', sans-serif;
  }
  .view-tabs button {
    display: flex;
    align-items: center;
    gap: 9px;
    padding: 0 8px 0 2px;
    color: #000;
    background: linear-gradient(#333, #333) right center / 1px 10px no-repeat;
  }
  .view-tabs button:nth-child(-n + 2) { gap: 6px; }
  .view-tabs button:disabled { color: #96938f; }
  .view-tabs .active { background: #f4f4f4; border: 1px solid #444; border-width: 0 1px 1px 0; padding-left: 3px; }

  .dock { display: flex; flex-direction: column; gap: 12px; width: 18px; padding-top: 2px; }
  .dock button {
    align-self: flex-end;
    width: 16px;
    height: 90px;
    padding: 2px;
    box-sizing: border-box;
    writing-mode: vertical-rl;
    text-align: left;
    color: #555;
    background: #f0f0f0;
    border: 1px solid #bbb;
    border-right: 0;
  }
  .dock .tall { height: 118px; }

  .status {
    display: flex;
    align-items: center;
    justify-content: flex-end;
    height: 15px;
    margin-top: 1px;
    margin-right: 18px;
    background: #f0f0f0;
    color: #666;
  }
  .status span {
    width: 61px;
    padding-left: 4px;
    border: 1px solid #ccc;
    border-width: 0 1px;
  }

  /* popup menus */
  .menu { position: absolute; z-index: 1; }
  .menu::before {
    content: '';
    position: absolute;
    inset: 4px -2px -2px 4px;
    background: #8a8a8a;
    box-shadow: 1px 1px 1px #bbb;
    z-index: -1;
  }
  .menu ul {
    display: flex;
    flex-direction: column;
    box-sizing: border-box;
    height: 100%;
    padding: 1px 2px 2px;
    background: #f1f1f1;
    border: 1px solid #ccc;
    color: #2b2b33;
  }
  .context { left: 421px; top: 0; width: 200px; height: 507px; }
  .context::before { top: 95px; }
  .submenu { left: 617px; top: 356px; width: 259px; height: 169px; }
  .entry { display: flex; flex: 16 1 0; }
  .entry.hot { background: #91c9f7; }
  .entry button {
    display: flex;
    align-items: center;
    flex: 1;
    padding: 0 5px 0 24px;
  }
  .entry button:disabled { color: #909090; }
  .entry span { flex: 1; text-align: left; }
  .entry kbd { font: inherit; margin-right: 9px; }
  .sep {
    flex: 5 1 0;
    margin: 0 0 0 22px;
    background: linear-gradient(#d4d4d4, #d4d4d4) center / 100% 1px no-repeat;
  }
</style>
